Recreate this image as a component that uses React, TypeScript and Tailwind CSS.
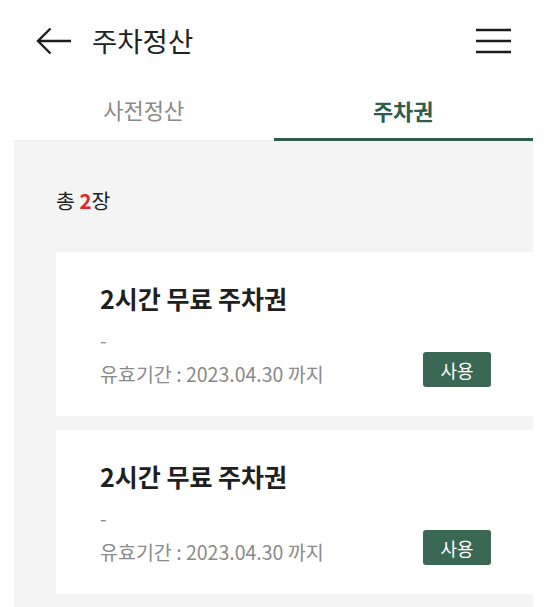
const font = { fontFamily: '"Noto Sans CJK KR", "Noto Sans", sans-serif' };

interface Ticket {
  id: number;
  title: string;
  memo: string;
  until: string;
}

const tickets: Ticket[] = [
  { id: 1, title: '2시간 무료 주차권', memo: '-', until: '2023.04.30' },
  { id: 2, title: '2시간 무료 주차권', memo: '-', until: '2023.04.30' },
];

function TicketCard({ ticket }: { ticket: Ticket }) {
  return (
    <div className="h-[164px] bg-white pl-[44px] pr-[42px] pt-[30px]">
      <h3 className="text-[25px] leading-[32px] font-bold text-[#1f1f1f]">{ticket.title}</h3>
      <p className="mt-[14px] text-[19px] leading-[24px] text-[#8a8a8a]">{ticket.memo}</p>
      <div className="flex items-end justify-between">
        <span className="text-[19.5px] leading-[26px] text-[#8a8a8a]">
          유효기간 : {ticket.until} 까지
        </span>
        <button className="w-[68px] h-[35px] rounded-[3px] bg-[#3b6755] text-white text-[18px] leading-none">
          사용
        </button>
      </div>
    </div>
  );
}

export default function App() {
  return (
    <div className="w-[548px] h-[607px] bg-white overflow-hidden" style={font}>
      <header className="h-[82px] flex items-center pl-[36px] pr-[37px]">
        <svg width="36" height="28" viewBox="0 0 36 28" fill="none" stroke="#1c1c1c" strokeWidth="2.4">
          <path d="M35 14H2.5" />
          <path d="M14.5 1.5L2 14l12.5 12.5" />
        </svg>
        <h1 className="ml-[20px] text-[27.5px] leading-none text-[#222]">주차정산</h1>
        <svg className="ml-auto" width="35" height="26" viewBox="0 0 35 26" stroke="#1c1c1c" strokeWidth="2.6">
          <path d="M0 2h35M0 13h35M0 24h35" />
        </svg>
      </header>

      <nav className="mx-[14px] mr-[15px] flex h-[59px] border-b border-[#ececec]">
        <div className="flex-1 flex items-center justify-center border-b-[3px] border-transparent text-[22px] text-[#8a8a8a]">
          사전정산
        </div>
        <div className="flex-1 flex items-center justify-center -mb-px border-b-[3px] border-[#2f5d4b] text-[22px] font-bold text-[#2f5d4b]">
          주차권
        </div>
      </nav>

      <main className="ml-[14px] mr-[15px] h-[466px] bg-[#f4f4f4] pl-[42px] pt-[47px]">
        <p className="text-[20.5px] leading-[24px] text-[#1f1f1f]">
          총 <span className="font-bold text-[#e0262b]">2</span>장
        </p>
        <div className="mt-[40px] flex flex-col gap-[14px]">
          {tickets.map((t) => (
            <TicketCard key={t.id} ticket={t} />
          ))}
        </div>
      </main>
    </div>
  );
}
